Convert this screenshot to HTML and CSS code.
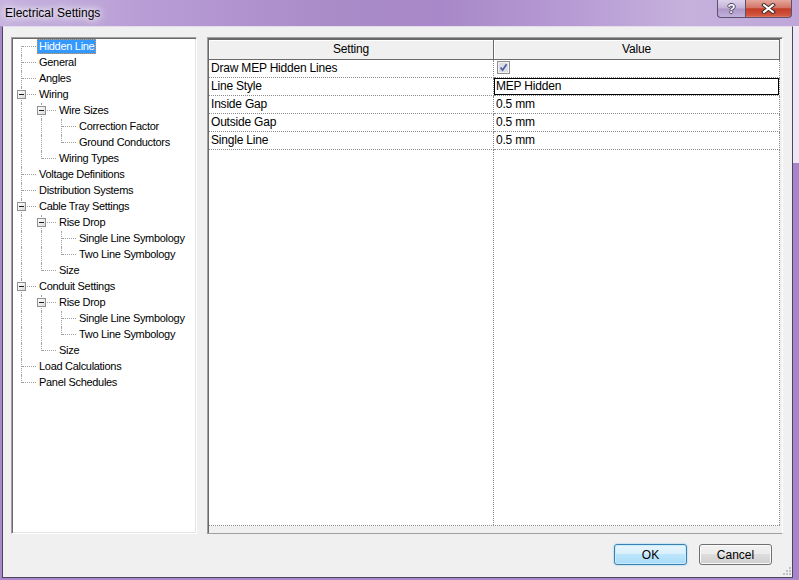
FILE: index.html
```html
<!DOCTYPE html>
<html lang="en">
<head>
    <meta charset="UTF-8">
    <title>Electrical Settings</title>
    <link rel="stylesheet" href="styles.css">
</head>
<body>
<div class="window">
    <div class="titlebar">
        <span class="title">Electrical Settings</span>
        <div class="caption">
            <div class="cap-btn help"><span>?</span></div>
            <div class="cap-btn close">
                <svg width="15" height="11" viewBox="0 0 15 11">
                    <path d="M3 2 L12 9 M12 2 L3 9" stroke="#3b2a2a" stroke-width="4" stroke-linecap="square" fill="none"/>
                    <path d="M3 2 L12 9 M12 2 L3 9" stroke="#fff" stroke-width="2" stroke-linecap="square" fill="none"/>
                </svg>
            </div>
        </div>
    </div>
    <div class="frame">
        <div class="edge-left"></div>
        <div class="client">
            <div class="panes">
                <div class="tree">
                    <div class="node"><span class="g first"></span><span class="label selected">Hidden Line</span></div>
                    <div class="node"><span class="g tee"></span><span class="label">General</span></div>
                    <div class="node"><span class="g tee"></span><span class="label">Angles</span></div>
                    <div class="node"><span class="g tee"><i class="box"></i></span><span class="label">Wiring</span></div>
                    <div class="node"><span class="g pipe"></span><span class="g tee"><i class="box"></i></span><span class="label">Wire Sizes</span></div>
                    <div class="node"><span class="g pipe"></span><span class="g pipe"></span><span class="g tee"></span><span class="label">Correction Factor</span></div>
                    <div class="node"><span class="g pipe"></span><span class="g pipe"></span><span class="g last"></span><span class="label">Ground Conductors</span></div>
                    <div class="node"><span class="g pipe"></span><span class="g last"></span><span class="label">Wiring Types</span></div>
                    <div class="node"><span class="g tee"></span><span class="label">Voltage Definitions</span></div>
                    <div class="node"><span class="g tee"></span><span class="label">Distribution Systems</span></div>
                    <div class="node"><span class="g tee"><i class="box"></i></span><span class="label">Cable Tray Settings</span></div>
                    <div class="node"><span class="g pipe"></span><span class="g tee"><i class="box"></i></span><span class="label">Rise Drop</span></div>
                    <div class="node"><span class="g pipe"></span><span class="g pipe"></span><span class="g tee"></span><span class="label">Single Line Symbology</span></div>
                    <div class="node"><span class="g pipe"></span><span class="g pipe"></span><span class="g last"></span><span class="label">Two Line Symbology</span></div>
                    <div class="node"><span class="g pipe"></span><span class="g last"></span><span class="label">Size</span></div>
                    <div class="node"><span class="g tee"><i class="box"></i></span><span class="label">Conduit Settings</span></div>
                    <div class="node"><span class="g pipe"></span><span class="g tee"><i class="box"></i></span><span class="label">Rise Drop</span></div>
                    <div class="node"><span class="g pipe"></span><span class="g pipe"></span><span class="g tee"></span><span class="label">Single Line Symbology</span></div>
                    <div class="node"><span class="g pipe"></span><span class="g pipe"></span><span class="g last"></span><span class="label">Two Line Symbology</span></div>
                    <div class="node"><span class="g pipe"></span><span class="g last"></span><span class="label">Size</span></div>
                    <div class="node"><span class="g tee"></span><span class="label">Load Calculations</span></div>
                    <div class="node"><span class="g last"></span><span class="label">Panel Schedules</span></div>
                </div>
                <div class="grid">
                    <div class="table">
                        <div class="th">Setting</div>
                        <div class="th">Value</div>

                        <div class="td">Draw MEP Hidden Lines</div>
                        <div class="td check">
                            <svg width="13" height="13" viewBox="0 0 13 13">
                                <rect x="0.5" y="0.5" width="12" height="12" fill="#f2f2f2" stroke="#8f8f8f"/>
                                <rect x="2" y="2" width="9" height="9" fill="#dcdee4"/>
                                <path d="M3.5 6.5 L5.6 9 L9.6 3.2" stroke="#4b5fa6" stroke-width="1.7" fill="none"/>
                            </svg>
                        </div>

                        <div class="td">Line Style</div>
                        <div class="td editing">MEP Hidden</div>

                        <div class="td">Inside Gap</div>
                        <div class="td">0.5 mm</div>

                        <div class="td">Outside Gap</div>
                        <div class="td">0.5 mm</div>

                        <div class="td">Single Line</div>
                        <div class="td">0.5 mm</div>

                        <div class="fill"></div>
                        <div class="fill"></div>
                    </div>
                </div>
            </div>
            <div class="buttons">
                <button class="btn default">OK</button>
                <button class="btn">Cancel</button>
            </div>
            <div class="grip">
                <svg width="8" height="8" viewBox="0 0 8 8">
                    <rect x="6" y="0" width="2" height="2" fill="#c2c2c2"/>
                    <rect x="6" y="3" width="2" height="2" fill="#c2c2c2"/>
                    <rect x="3" y="3" width="2" height="2" fill="#c2c2c2"/>
                    <rect x="6" y="6" width="2" height="2" fill="#c2c2c2"/>
                    <rect x="3" y="6" width="2" height="2" fill="#c2c2c2"/>
                    <rect x="0" y="6" width="2" height="2" fill="#c2c2c2"/>
                </svg>
            </div>
        </div>
        <div class="edge-right"></div>
    </div>
    <div class="edge-bottom"></div>
</div>
</body>
</html>
```

FILE: styles.css
```css
*{
    margin: 0;
    padding: 0;
    box-sizing: border-box;
}

body{
    width: 799px;
    height: 580px;
    overflow: hidden;
    font-family: "Liberation Sans", Arial, sans-serif;
    color: #000;
}

.window{
    width: 799px;
    height: 580px;
    display: flex;
    flex-direction: column;
    background: #a888c8;
}

/* title bar */
.titlebar{
    height: 26px;
    display: flex;
    align-items: flex-start;
    background: linear-gradient(90deg, #c7b3df 0%, #b89dd5 18%, #aa8cc9 40%, #a888c8 55%, #b79cd4 72%, #c6b1dd 86%, #bea6d9 100%);
}

.title{
    font-size: 12px;
    line-height: 15px;
    margin: 6px 0 0 5px;
    text-shadow: 0 0 6px #fff, 0 0 10px #fff, 0 0 14px rgba(255,255,255,0.8);
}

.caption{
    margin-left: auto;
    margin-right: 7px;
    display: flex;
}

.cap-btn{
    height: 18px;
    display: flex;
    align-items: center;
    justify-content: center;
    border: 1px solid #5d4f70;
    border-top: none;
}

.help{
    width: 28px;
    border-right: none;
    border-radius: 0 0 0 4px;
    background: linear-gradient(#ddd2ea, #c4b3da 48%, #ad97c9 52%, #c2b1da);
}

.help span{
    font-weight: bold;
    font-size: 13px;
    color: #fff;
    text-shadow: -1px 0 #4a4060, 1px 0 #4a4060, 0 -1px #4a4060, 0 1px #4a4060;
}

.close{
    width: 47px;
    border-radius: 0 0 4px 0;
    background: linear-gradient(#e4a79d, #d47566 45%, #c43d27 52%, #d2543d 90%, #e2806a);
}

/* frame */
.frame{
    display: flex;
    height: 552px;
}

.edge-left{
    width: 2px;
    background: #a98ac8;
}

.edge-right{
    width: 6px;
    background: linear-gradient(#ede7f3 0, #ede7f3 137px, #a685c8 137px);
}

.edge-bottom{
    height: 2px;
    background: #a888c8;
}

.client{
    flex: 1;
    position: relative;
    display: flex;
    flex-direction: column;
    background: #f0f0f0;
    border: 1px solid #4e4360;
    border-top-color: #e4dbed;
    padding: 10px 9px 12px 8px;
}

.panes{
    display: flex;
    height: 497px;
    gap: 10px;
}

/* tree */
.tree{
    width: 186px;
    background: #fff;
    border: 1px solid;
    border-color: #a0a0a0 #fff #fff #a0a0a0;
    box-shadow: inset 1px 1px 0 #696969, inset -1px -1px 0 #e3e3e3;
    padding: 1px 0 0 1px;
    font-size: 11px;
}

.node{
    display: flex;
    height: 16px;
}

.g{
    position: relative;
    flex: none;
    width: 20px;
    height: 16px;
}

.g::before,
.g::after{
    content: "";
    position: absolute;
}

.g::before{
    left: 8px;
    top: 0;
    bottom: 0;
    border-left: 1px dotted #a0a0a0;
}

.g::after{
    left: 9px;
    top: 7px;
    width: 14px;
    border-top: 1px dotted #a0a0a0;
}

.g.pipe::after{
    display: none;
}

.g.first::before{
    top: 7px;
}

.g.last::before{
    bottom: 8px;
}

.box{
    position: absolute;
    z-index: 1;
    left: 4px;
    top: 3px;
    width: 9px;
    height: 9px;
    border: 1px solid #919191;
    background: linear-gradient(135deg, #fff, #dadada);
}

.box::after{
    content: "";
    position: absolute;
    left: 1px;
    top: 3px;
    width: 5px;
    height: 1px;
    background: #1e1e1e;
}

.label{
    margin-left: 4px;
    padding: 0 2px;
    height: 15px;
    line-height: 15px;
    white-space: nowrap;
    letter-spacing: -0.3px;
}

.label.selected{
    background: #3399ff;
    color: #fff;
    outline: 1px dotted #e8913a;
    outline-offset: -1px;
}

/* property grid */
.grid{
    flex: 1;
    background: #f0f0f0;
    border: 1px solid;
    border-color: #a0a0a0 #fff #a0a0a0 #a0a0a0;
    box-shadow: inset 1px 1px 0 #696969;
    padding: 1px 0 0 1px;
}

.table{
    width: 571px;
    height: 487px;
    background: #fff;
    display: grid;
    grid-template-columns: 285px 286px;
    grid-template-rows: 21px repeat(5, 18px) 1fr;
    border-bottom: 1px dotted #8c8c8c;
    font-size: 12px;
    letter-spacing: -0.2px;
}

.th{
    background: #f0f0f0;
    border-top: 1px solid #696969;
    border-right: 1px solid #696969;
    border-bottom: 1px solid #696969;
    box-shadow: inset 1px 1px 0 #fff;
    text-align: center;
    line-height: 19px;
}

.td{
    border-right: 1px dotted #8c8c8c;
    border-bottom: 1px dotted #8c8c8c;
    padding-left: 2px;
    line-height: 17px;
    white-space: nowrap;
}

.td.check{
    padding: 1px 0 0 3px;
    line-height: 0;
}

.td.editing{
    box-shadow: inset 0 0 0 1px #000;
}

.fill{
    border-right: 1px dotted #8c8c8c;
}

/* buttons */
.buttons{
    display: flex;
    justify-content: flex-end;
    gap: 12px;
    margin-top: 10px;
    padding-right: 11px;
}

.btn{
    width: 73px;
    height: 21px;
    font: 12px "Liberation Sans", Arial, sans-serif;
    color: #000;
    border: 1px solid #707070;
    border-radius: 3px;
    background: linear-gradient(#f2f2f2, #ebebeb 50%, #dddddd 50%, #cfcfcf);
    box-shadow: inset 0 0 0 1px #fbfbfb;
}

.btn.default{
    border-color: #3c7fb1;
    background: linear-gradient(#e8f6fd, #d7effc 50%, #bde6fd 50%, #a9dbf6);
    box-shadow: inset 0 0 0 1px #c9ecfb, 0 0 2px #7cc4ee;
}

.grip{
    position: absolute;
    right: 1px;
    bottom: 2px;
    line-height: 0;
}
```
